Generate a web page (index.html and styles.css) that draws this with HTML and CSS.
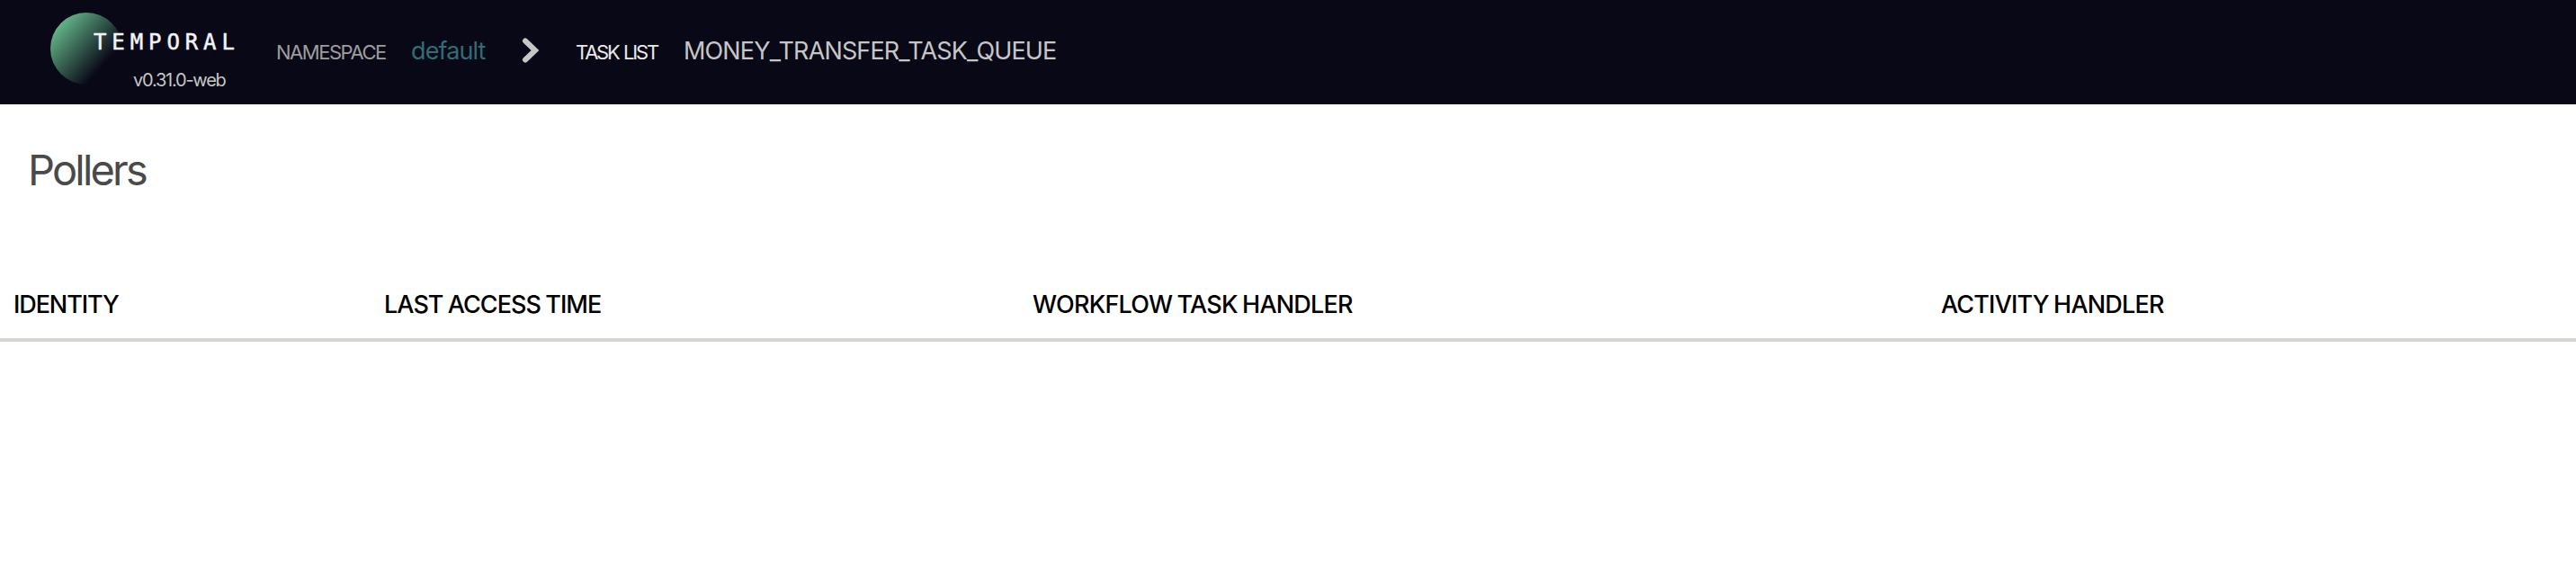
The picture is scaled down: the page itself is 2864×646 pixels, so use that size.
FILE: index.html
```html
<!DOCTYPE html>
<html lang="en">
<head>
<meta charset="utf-8">
<title>Pollers</title>
<link rel="stylesheet" href="styles.css">
</head>
<body>
<header class="topbar">
  <a class="brand">
    <svg class="logo" width="224" height="86" viewBox="0 0 224 86">
      <defs>
        <linearGradient id="orb" gradientUnits="userSpaceOnUse" x1="8" y1="18" x2="57" y2="61">
          <stop offset="0" stop-color="#60b085"/>
          <stop offset="1" stop-color="#60b085" stop-opacity="0"/>
        </linearGradient>
      </defs>
      <circle cx="40" cy="40" r="40" fill="url(#orb)"/>
      <text class="wordmark" x="48" y="40.500">TEMPORAL</text>
    </svg>
    <span class="version">v0.31.0-web</span>
  </a>
  <nav class="crumbs">
    <span class="label namespace">NAMESPACE</span>
    <a class="link">default</a>
    <svg class="chevron" width="20" height="30" viewBox="0 0 20 30"><path d="M4 4.500L15 15L4 25.500"/></svg>
    <span class="label tasklist">TASK LIST</span>
    <span class="queue">MONEY_TRANSFER_TASK_QUEUE</span>
  </nav>
</header>
<main>
  <h1 class="title">Pollers</h1>
  <div class="table-head">
    <div class="th identity">IDENTITY</div>
    <div class="th access">LAST ACCESS TIME</div>
    <div class="th workflow">WORKFLOW TASK HANDLER</div>
    <div class="th activity">ACTIVITY HANDLER</div>
  </div>
</main>
</body>
</html>
```
FILE: styles.css
```css
body {
  margin: 0;
  background: #fff;
  font-family: Inter, sans-serif;
}

.topbar {
  display: flex;
  height: 116px;
  background: #090816;
  color: #c6c6c6;
  white-space: nowrap;
}

.brand {
  display: flex;
  flex-direction: column;
  width: 251px;
  padding: 14px 0 0 56px;
}

.logo {
  display: block;
  flex: none;
  height: 86px;
  margin-bottom: -22px;
}

.wordmark {
  font: 400 24px "DejaVu Sans Mono", monospace;
  letter-spacing: 5.900px;
  fill: #f4f4f6;
  stroke: #f4f4f6;
  stroke-width: 0.500px;
}

.version {
  margin-left: 92px;
  font-size: 20px;
  line-height: 23px;
  letter-spacing: -1.220px;
}

.crumbs {
  display: flex;
  align-items: baseline;
  line-height: 114px;
}

.label {
  font-size: 22px;
  line-height: 24px;
}

.namespace {
  width: 150px;
  color: #9d9d9f;
  letter-spacing: -1.480px;
}

.link {
  width: 123px;
  color: #2f6d77;
  font-size: 27px;
  letter-spacing: -0.900px;
}

.chevron {
  align-self: flex-start;
  width: 20px;
  margin: 41px 40px 0 0;
  fill: none;
  stroke: #c6c6c6;
  stroke-width: 6;
  stroke-linecap: round;
}

.tasklist {
  width: 120px;
  color: #eceae6;
  letter-spacing: -2.200px;
  word-spacing: 1.500px;
}

.queue {
  font-size: 27px;
  letter-spacing: -0.860px;
}

.title {
  margin: 0;
  padding: 43px 0 0 31px;
  color: #4a4a4a;
  font-size: 47px;
  font-weight: 400;
  line-height: 60px;
  letter-spacing: -2.800px;
}

.table-head {
  display: grid;
  grid-template-columns: 412px 721px 1010px 1fr;
  margin-top: 90px;
  padding-bottom: 7px;
  border-bottom: 4px solid #d5d5d2;
}

.th {
  padding-left: 15px;
  color: #000;
  font-size: 27px;
  font-weight: 500;
  line-height: 60px;
  white-space: nowrap;
}

.identity { letter-spacing: -1.100px; }
.access { letter-spacing: -0.950px; word-spacing: -1px; }
.workflow { letter-spacing: -0.800px; word-spacing: -1px; }
.activity { letter-spacing: -0.820px; word-spacing: -1px; }
```
